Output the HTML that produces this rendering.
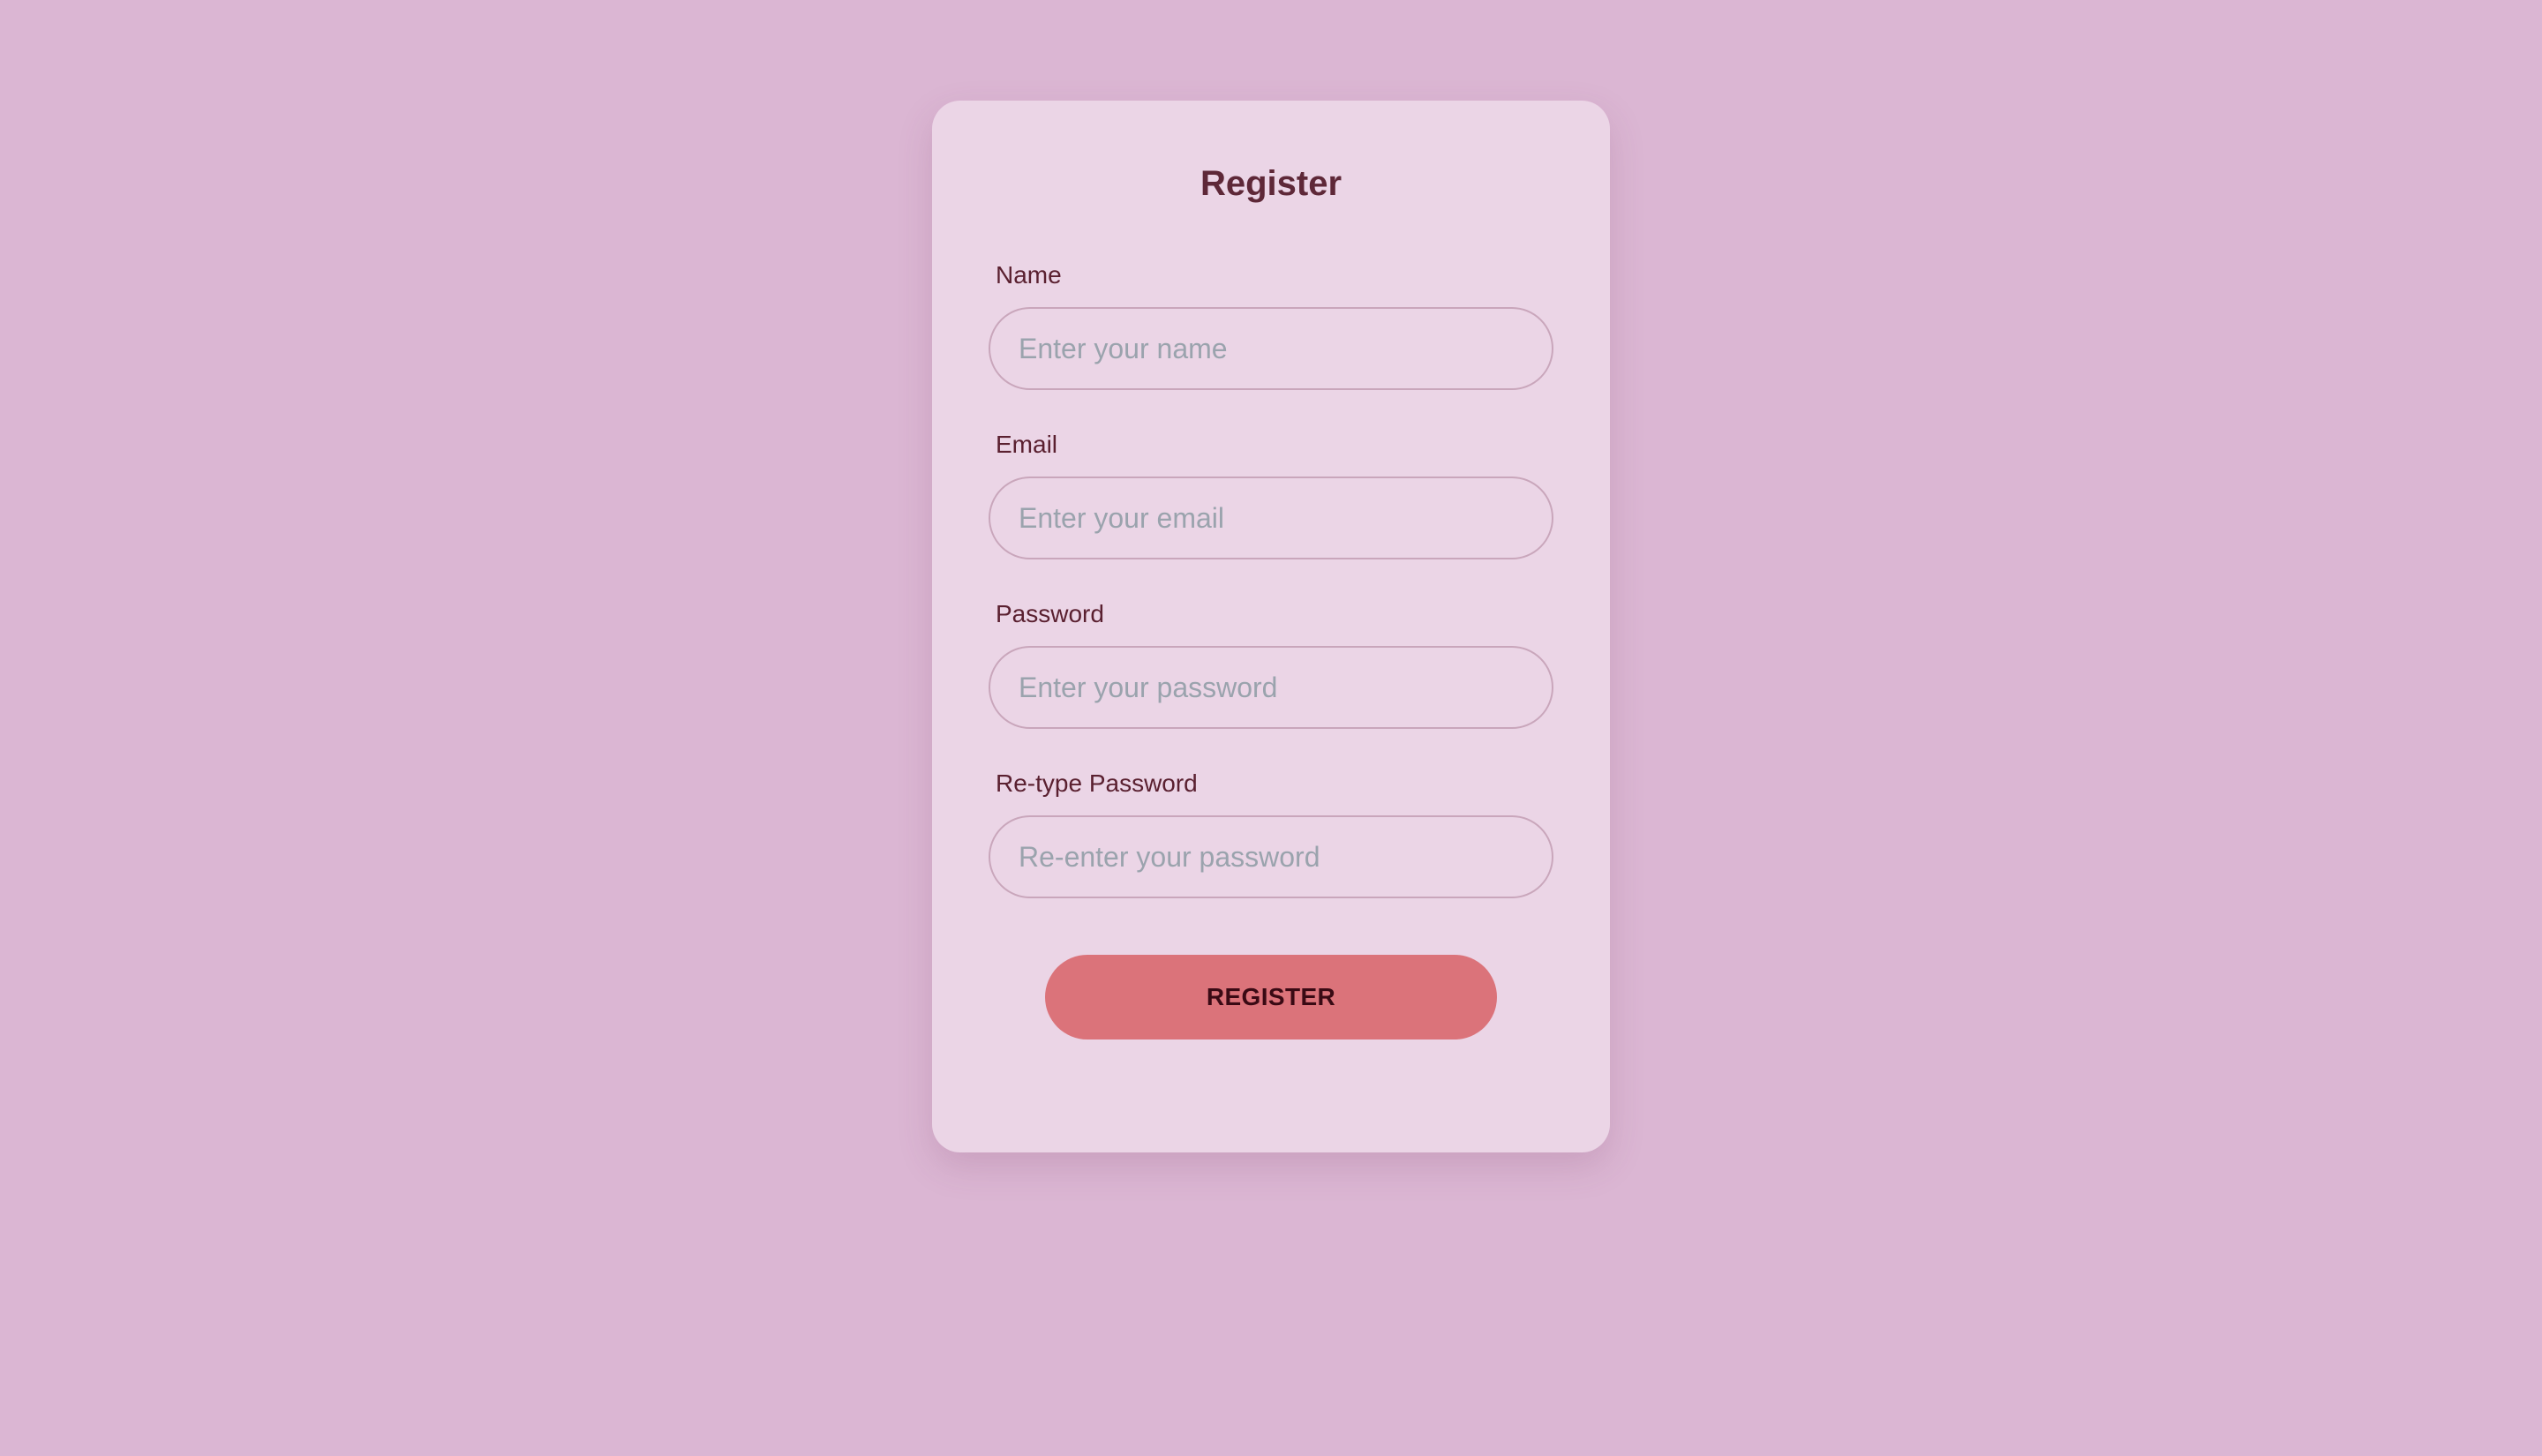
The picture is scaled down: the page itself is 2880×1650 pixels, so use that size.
<!DOCTYPE html>
<html><head><meta charset="utf-8"><style>
html,body{margin:0;padding:0}
body{width:1440px;height:825px;zoom:2;background:#dbb6d3;font-family:"Liberation Sans",sans-serif;position:relative;overflow:hidden}
.card{position:absolute;left:528px;top:57px;width:384px;height:596px;background:#ebd5e6;border-radius:16px;box-shadow:0 8px 20px rgba(120,60,100,0.18)}
h1{position:absolute;top:91px;margin:0;text-align:center;font-size:20px;font-weight:bold;color:#5e2838;line-height:26px}
.lbl{position:absolute;left:564px;font-size:14px;color:#5a2030;line-height:18px}
.inp{position:absolute;left:560px;width:320px;height:47px;border:1px solid #c9a6bb;border-radius:24px;font-size:16px;color:#9aa3ad;line-height:45px;padding-left:16px;box-sizing:border-box}
.btn{position:absolute;left:592px;top:541px;width:256px;height:48px;border-radius:24px;background:#db737a;color:#3a0a14;font-weight:bold;font-size:14px;text-align:center;line-height:48px;letter-spacing:0.2px}
</style></head><body>
<div class="card"></div>
<h1 style="left:528px;width:384px">Register</h1>
<div class="lbl" style="top:147px">Name</div>
<div class="inp" style="top:174px">Enter your name</div>
<div class="lbl" style="top:243px">Email</div>
<div class="inp" style="top:270px">Enter your email</div>
<div class="lbl" style="top:339px">Password</div>
<div class="inp" style="top:366px">Enter your password</div>
<div class="lbl" style="top:435px">Re-type Password</div>
<div class="inp" style="top:462px">Re-enter your password</div>
<div class="btn">REGISTER</div>
</body></html>
